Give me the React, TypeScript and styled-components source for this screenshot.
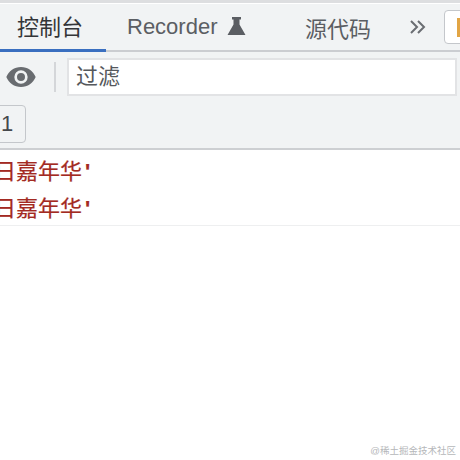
import React from 'react'
import styled, { createGlobalStyle } from 'styled-components'

const cjk = `"Liberation Sans", "Noto Sans CJK SC", sans-serif`

const GlobalStyle = createGlobalStyle`
  html, body {
    margin: 0;
    padding: 0;
    background: #fff;
    font-family: ${cjk};
  }
`

const Page = styled.div`
  position: relative;
  width: 460px;
  height: 460px;
  overflow: hidden;
  background: #fff;
`

const TopEdge = styled.div`
  height: 3px;
  background: #dddee0;
`

const TabBar = styled.div`
  display: flex;
  align-items: center;
  height: 48px;
  box-sizing: border-box;
  background: #f1f3f4;
  border-bottom: 2px solid #cbcdd1;
  margin-top: 1px;
`

const Tab = styled.div<{ $active?: boolean; $width: number; $indent: number }>`
  display: flex;
  align-items: center;
  gap: 10px;
  box-sizing: border-box;
  flex: none;
  width: ${({ $width }) => $width}px;
  height: 48px;
  padding-left: ${({ $indent }) => $indent}px;
  padding-bottom: ${({ $active }) => ($active ? '2px' : '1px')};
  font-size: 22px;
  color: ${({ $active }) => ($active ? '#333538' : '#5b5e63')};
  border-bottom: ${({ $active }) => ($active ? '3px solid #3a6fc0' : 'none')};
  margin-bottom: ${({ $active }) => ($active ? '-1px' : '0')};
`

const Flask = styled.svg`
  width: 19px;
  height: 20px;
  margin-top: -2px;
  fill: #5b5e63;
`

const More = styled.svg`
  flex: none;
  width: 17px;
  height: 16px;
  margin-left: 22px;
  fill: none;
  stroke: #6a6d72;
  stroke-width: 2;
`

const IssueButton = styled.div`
  display: flex;
  flex: none;
  box-sizing: border-box;
  width: 30px;
  height: 34px;
  margin-left: 18px;
  padding: 7px 0 0 12px;
  background: #fff;
  border: 1px solid #c4c7cb;
  border-radius: 4px;
`

const IssueMark = styled.span`
  width: 6px;
  height: 19px;
  background: #e2a544;
`

const FilterRow = styled.div`
  display: flex;
  align-items: center;
  height: 48px;
  box-sizing: border-box;
  padding: 2px 3px 0 6px;
  background: #f1f3f4;
`

const EyeIcon = styled.svg`
  flex: none;
  width: 30px;
  height: 20px;
  fill: #696c70;
`

const Divider = styled.div`
  flex: none;
  width: 2px;
  height: 30px;
  margin: 0 11px 0 18px;
  background: #d4d6d9;
`

const FilterBox = styled.div`
  flex: 1;
  height: 38px;
  box-sizing: border-box;
  padding-left: 7px;
  font-size: 22px;
  line-height: 33px;
  color: #55585c;
  background: #fff;
  border: 2px solid #e2e3e5;
`

const CountRow = styled.div`
  height: 50px;
  box-sizing: border-box;
  padding-top: 5px;
  background: #f1f3f4;
  border-bottom: 2px solid #cdcfd2;
`

const CountButton = styled.div`
  width: 32px;
  height: 38px;
  box-sizing: border-box;
  margin-left: -6px;
  padding-left: 6px;
  font-size: 22px;
  line-height: 36px;
  color: #45484c;
  border: 1px solid #c4c7cb;
  border-radius: 4px;
`

const LogList = styled.div`
  border-bottom: 1px solid #eeeff0;
  height: 76px;
  box-sizing: border-box;
`

const LogLine = styled.div`
  height: 37px;
  font-size: 22px;
  line-height: 44px;
  white-space: nowrap;
  color: #a32a22;
  -webkit-text-stroke: 0.2px #a32a22;
  overflow: hidden;
`

const Mark = styled.span`
  margin-left: -6px;
  display: inline-block;
`

const Quote = styled.span`
  font-weight: 700;
  margin-left: 3px;
`

const Watermark = styled.div`
  position: absolute;
  right: 4px;
  bottom: 3px;
  font-size: 9.5px;
  color: #b5b7ba;
`

const App = () => (
  <Page>
    <GlobalStyle />
    <TopEdge />
    <TabBar>
      <Tab $active $width={106} $indent={17}>控制台</Tab>
      <Tab $width={177} $indent={21}>
        Recorder
        <Flask viewBox="0 0 19 20">
          <path d="M5 1h9v2.500h-1.500v5L18.500 19H.5L6.500 8.500V3.500H5z" />
        </Flask>
      </Tab>
      <Tab $width={104} $indent={22}>源代码</Tab>
      <More viewBox="0 0 17 16">
        <path d="M2 2l6 6-6 6M9 2l6 6-6 6" />
      </More>
      <IssueButton>
        <IssueMark />
      </IssueButton>
    </TabBar>
    <FilterRow>
      <EyeIcon viewBox="1 4.500 22 15">
        <path d="M12 4.500C7 4.500 2.730 7.610 1 12c1.730 4.390 6 7.500 11 7.500s9.270-3.110 11-7.500c-1.730-4.390-6-7.500-11-7.500zM12 17a5 5 0 1 1 0-10 5 5 0 0 1 0 10zm0-8a3 3 0 1 0 0 6 3 3 0 0 0 0-6z" />
      </EyeIcon>
      <Divider />
      <FilterBox>过滤</FilterBox>
    </FilterRow>
    <CountRow>
      <CountButton>1</CountButton>
    </CountRow>
    <LogList>
      <LogLine><Mark>日嘉年华<Quote>'</Quote></Mark></LogLine>
      <LogLine><Mark>日嘉年华<Quote>'</Quote></Mark></LogLine>
    </LogList>
    <Watermark>@稀土掘金技术社区</Watermark>
  </Page>
)

export default App
